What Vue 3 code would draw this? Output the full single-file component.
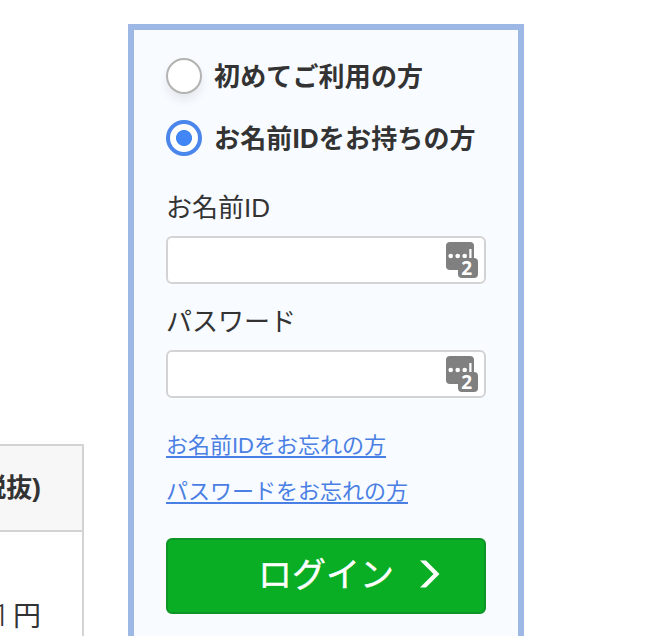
<template>
  <div class="page">
    <table class="price-table">
      <tbody>
        <tr>
          <th><div class="cell">税抜)</div></th>
        </tr>
        <tr>
          <td><div class="cell"><span class="price">1</span>円</div></td>
        </tr>
      </tbody>
    </table>

    <form class="login-panel" @submit.prevent>
      <label v-for="o in userTypes" :key="o.value" class="radio-row">
        <input v-model="userType" type="radio" name="userType" :value="o.value" />
        <span>{{ o.label }}</span>
      </label>

      <div v-for="f in fields" :key="f.name" class="field">
        <label :for="f.name">{{ f.label }}</label>
        <div class="input-box">
          <input :id="f.name" v-model="form[f.name]" :type="f.type" />
          <svg class="key-icon" width="34" height="38" viewBox="0 0 34 38">
            <rect x="0" y="0" width="28" height="28" rx="4" fill="#808080" />
            <circle cx="4.7" cy="14" r="2.3" fill="#fff" />
            <circle cx="11.7" cy="14" r="2.3" fill="#fff" />
            <circle cx="18.7" cy="14" r="2.3" fill="#fff" />
            <rect x="23.3" y="7" width="2.2" height="10" fill="#fff" />
            <rect x="12" y="16" width="20" height="20" rx="4" fill="#808080" />
            <text x="20.8" y="33">2</text>
          </svg>
        </div>
      </div>

      <ul class="links">
        <li><a href="#">お名前IDをお忘れの方</a></li>
        <li><a href="#">パスワードをお忘れの方</a></li>
      </ul>

      <button type="submit" class="login-btn">
        <span>ログイン</span>
        <svg width="20" height="28" viewBox="0 0 20 28">
          <path d="M0 0.5h6L19.5 14 6 27.5H0L13.5 14z" fill="#fff" />
        </svg>
      </button>
    </form>
  </div>
</template>

<script setup>
import { ref, reactive } from 'vue'

const userType = ref('member')
const userTypes = [
  { value: 'new', label: '初めてご利用の方' },
  { value: 'member', label: 'お名前IDをお持ちの方' },
]

const form = reactive({ loginId: '', password: '' })
const fields = [
  { name: 'loginId', label: 'お名前ID', type: 'text' },
  { name: 'password', label: 'パスワード', type: 'password' },
]
</script>

<style>
body {
  background: #fff;
  overflow: hidden;
}
</style>

<style scoped>
.page {
  box-sizing: border-box;
  display: flex;
  align-items: flex-start;
  gap: 44px;
  height: 636px;
  padding-top: 24px;
  overflow: hidden;
  color: #333;
  font-family: "Liberation Sans", "Noto Sans CJK JP", sans-serif;
  font-size: 26px;
}
.price-table {
  width: 84px;
  margin-top: 420px;
  border-spacing: 0;
  border-top: 2px solid #d3d3d3;
  border-right: 2px solid #d3d3d3;
  table-layout: fixed;
}
.price-table th,
.price-table td {
  box-sizing: border-box;
  padding: 0 41px 6px 0;
}
.price-table th {
  height: 86px;
  background: #f7f7f7;
  border-bottom: 2px solid #d3d3d3;
}
.price-table td {
  height: 170px;
  font-size: 28px;
}
.cell {
  display: flex;
  align-items: baseline;
  justify-content: flex-end;
  white-space: nowrap;
}
.price {
  margin-right: 3px;
  font-family: Roboto, sans-serif;
  font-size: 32px;
  font-weight: 300;
}
.login-panel {
  box-sizing: border-box;
  width: 396px;
  height: 700px;
  padding: 28px 32px 0;
  border: 6px solid #9eb8e6;
  background: #f8fbff;
}
.radio-row {
  display: flex;
  align-items: center;
  gap: 12px;
  height: 36px;
  margin-bottom: 26px;
  font-family: Inter, "Noto Sans CJK JP", sans-serif;
  font-weight: 700;
  letter-spacing: 0.15px;
}
.radio-row span {
  padding-bottom: 4px;
}
.radio-row input {
  appearance: none;
  box-sizing: border-box;
  width: 36px;
  height: 36px;
  margin: 0;
  border: 2px solid #b3b3b3;
  border-radius: 50%;
  background: #fff;
  box-shadow: 0 6px 10px rgba(0, 0, 0, 0.08);
}
.radio-row input:checked {
  border: 4px solid #4a86ec;
  background: radial-gradient(circle, #4285f4 7.6px, #fff 8.4px);
  box-shadow: none;
}
.field {
  margin-bottom: 12px;
}
.field label {
  display: block;
  height: 54px;
  line-height: 52px;
}
.input-box {
  position: relative;
  height: 48px;
}
.input-box input {
  box-sizing: border-box;
  width: 100%;
  height: 48px;
  padding: 0 46px 0 12px;
  border: 2px solid #d3d3d5;
  border-radius: 6px;
  background: #fff;
  font: inherit;
  outline: none;
}
.key-icon {
  position: absolute;
  top: 6px;
  right: 6px;
}
.key-icon text {
  fill: #fff;
  font-family: "Open Sans", sans-serif;
  font-size: 19px;
  font-weight: 700;
  text-anchor: middle;
}
.links {
  margin: 0;
  padding: 13px 0 0;
  list-style: none;
  font-size: 22px;
}
.links li {
  height: 46px;
  line-height: 46px;
}
.links a {
  color: #4a80e4;
  text-decoration-thickness: 2px;
  text-underline-offset: 3px;
}
.login-btn {
  box-sizing: border-box;
  display: flex;
  align-items: center;
  justify-content: flex-end;
  gap: 26px;
  width: 320px;
  height: 76px;
  margin-top: 23px;
  padding: 0 44px 4px 0;
  border: 2px solid #0f9427;
  border-radius: 6px;
  background: #09ae24;
  color: #fff;
  font-family: inherit;
  font-size: 34px;
  -webkit-text-stroke: 0.4px #fff;
  cursor: pointer;
}
.login-btn span {
  padding-bottom: 3px;
}
</style>
